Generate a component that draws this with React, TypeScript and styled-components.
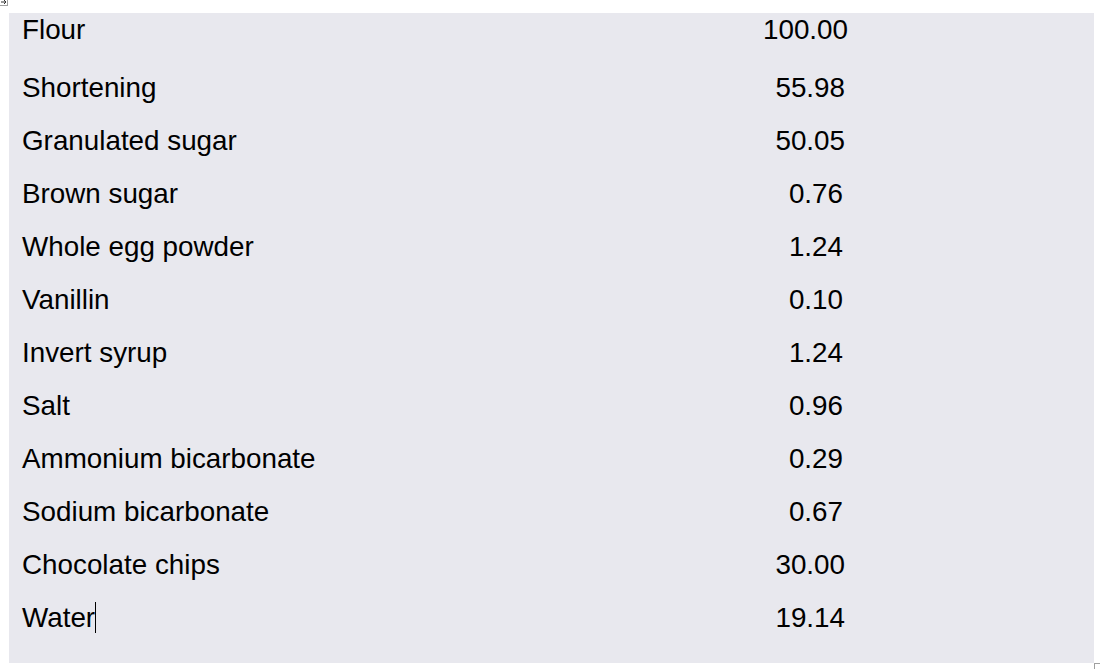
import React from "react";
import styled, { createGlobalStyle } from "styled-components";

const Global = createGlobalStyle`
  html, body { margin: 0; padding: 0; background: #ffffff; }
  body { font-family: "Liberation Sans", Arial, sans-serif; }
`;

const Page = styled.div`
  position: relative;
  width: 1100px;
  height: 669px;
  overflow: hidden;
  padding: 13px 0 0 9px;
  box-sizing: border-box;
`;

const Sheet = styled.div`
  width: 1085px;
  height: 650px;
  background: #e8e8ee;
  display: flex;
  flex-direction: column;
  padding-top: 1px;
  box-sizing: border-box;
`;

const Row = styled.div<{ $first?: boolean }>`
  display: grid;
  grid-template-columns: 600px 239px 1fr;
  height: ${(p) => (p.$first ? 58 : 53)}px;
  flex-shrink: 0;
  font-size: 27.8px;
  line-height: 32px;
  color: #000;
`;

const Name = styled.div`
  padding-left: 13px;
  white-space: nowrap;
`;

const Value = styled.div<{ $pad: number }>`
  text-align: right;
  white-space: nowrap;
  padding-right: ${(p) => p.$pad}px;
`;

const Caret = styled.span`
  position: relative;
  &::after {
    content: "";
    position: absolute;
    left: 0px;
    top: 0px;
    width: 1px;
    height: 31px;
    background: #000;
  }
`;

const MoveHandle = styled.div`
  position: absolute;
  left: 0;
  top: -2px;
  width: 7px;
  height: 7px;
  border-right: 1px solid #a0a0a0;
  border-bottom: 1px solid #a0a0a0;
  background: #fff;
  svg { display: block; }
`;

const ResizeHandle = styled.div`
  position: absolute;
  left: 1094px;
  top: 663px;
  width: 8px;
  height: 8px;
  border-left: 1px solid #a0a0a0;
  border-top: 1px solid #a0a0a0;
  background: #fff;
`;

const rows: [string, string][] = [
  ["Flour", "100.00"],
  ["Shortening", "55.98"],
  ["Granulated sugar", "50.05"],
  ["Brown sugar", "0.76"],
  ["Whole egg powder", "1.24"],
  ["Vanillin", "0.10"],
  ["Invert syrup", "1.24"],
  ["Salt", "0.96"],
  ["Ammonium bicarbonate", "0.29"],
  ["Sodium bicarbonate", "0.67"],
  ["Chocolate chips", "30.00"],
  ["Water", "19.14"],
];

const padFor = (v: string) => (v.length >= 6 ? 0 : v.length === 5 ? 3 : 5);

export default function App() {
  return (
    <>
      <Global />
      <Page>
        <Sheet>
          {rows.map(([n, v], i) => (
            <Row key={n} $first={i === 0}>
              <Name>
                {n}
                {i === rows.length - 1 && <Caret />}
              </Name>
              <Value $pad={padFor(v)}>{v}</Value>
              <div />
            </Row>
          ))}
        </Sheet>
        <MoveHandle>
          <svg width="7" height="7" viewBox="0 0 7 7">
            <path d="M1 4 H6 M4 2 L6 4 L4 6" stroke="#333" strokeWidth="1" fill="none" />
          </svg>
        </MoveHandle>
        <ResizeHandle />
      </Page>
    </>
  );
}
